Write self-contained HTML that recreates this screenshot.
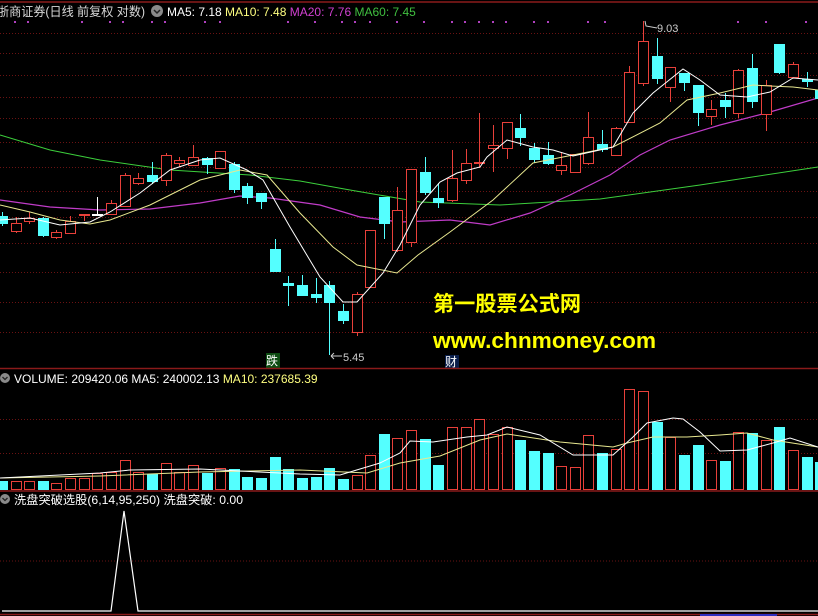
<!DOCTYPE html>
<html><head><meta charset="utf-8"><style>
html,body{margin:0;padding:0;background:#000;width:818px;height:616px;overflow:hidden}
svg{display:block}
text{font-family:"Liberation Sans","Noto Sans CJK SC",sans-serif}
</style></head><body>
<svg id="s" width="818" height="616" viewBox="0 0 818 616" xmlns="http://www.w3.org/2000/svg">
<rect width="818" height="616" fill="#000"/>
<line x1="0" y1="2" x2="818" y2="2" stroke="#8a1a1a" stroke-width="1.5"/>
<g id="grid" stroke="#6a1212" stroke-width="1" stroke-dasharray="1,2"></g>
<g id="dots" fill="#b040c0"></g>
<polyline fill="none" stroke="#3ccf3c" stroke-width="1" points="0,135 50,150 100,160 170,170 250,175 300,181 350,190 420,202 500,205 600,199 700,185 818,167"/>
<polyline fill="none" stroke="#c03cc8" stroke-width="1.2" points="0,200 50,207 100,210 150,209 200,203 240,196 270,198 320,205 360,217 400,222 450,220 490,225 530,213 570,195 610,175 640,155 670,140 720,125 770,112 818,98"/>
<g id="candles"></g>
<polyline fill="none" stroke="#e8e890" stroke-width="1" points="0,205 30,212 60,220 90,224 110,220 150,205 200,180 240,170 267,175 300,213 333,247 357,265 397,273 418,255 450,232 493,200 533,163 573,155 613,147 660,123 687,100 720,93 753,85 770,86 793,87 818,90"/>
<polyline fill="none" stroke="#fff" stroke-width="1" points="0,220 30,218 60,225 90,222 110,212 140,193 170,170 200,160 220,158 247,170 263,180 290,227 320,277 343,302 357,302 383,273 400,245 420,205 440,182 457,173 480,167 487,157 507,140 533,147 553,150 573,156 613,147 633,113 653,93 683,69 700,80 720,95 747,97 770,92 793,78 818,80"/>
<text x="-3" y="16" fill="#d8d8d8" font-size="12.5" textLength="148" lengthAdjust="spacingAndGlyphs">浙商证券(日线 前复权 对数)</text>
<circle cx="157" cy="11" r="6" fill="#8a8a8a"/><path d="M154 10 L157 13 L160 10" stroke="#222" stroke-width="1.5" fill="none"/>
<text x="167" y="16" font-size="12"><tspan fill="#fff">MA5: 7.18 </tspan><tspan fill="#ffff80">MA10: 7.48 </tspan><tspan fill="#d040d0">MA20: 7.76 </tspan><tspan fill="#40c040">MA60: 7.45</tspan></text>
<path d="M645 21 L646 26 L657 28" stroke="#ccc" fill="none"/>
<text x="657" y="32" fill="#ccc" font-size="11">9.03</text>
<path d="M331 356 L342 356 M331 356 l3 -3 M331 356 l3 3" stroke="#ccc" fill="none"/>
<text x="343" y="361" fill="#ccc" font-size="11">5.45</text>
<rect x="266" y="353" width="14" height="15" fill="#0d4d12"/><text x="266" y="365" fill="#fff" font-size="12">跌</text>
<rect x="445" y="355" width="14" height="14" fill="#0a1e4a"/><text x="445" y="366" fill="#fff" font-size="12">财</text>
<text x="433" y="311" fill="#ffff00" font-size="21" font-weight="bold" textLength="148" lengthAdjust="spacingAndGlyphs" font-family="'Noto Sans CJK SC',sans-serif">第一股票公式网</text>
<text x="433" y="348" fill="#ffff00" font-size="22" font-weight="bold" textLength="223" lengthAdjust="spacingAndGlyphs">www.chnmoney.com</text>
<line x1="0" y1="368.5" x2="818" y2="368.5" stroke="#8a1a1a" stroke-width="1.5"/>
<circle cx="5" cy="378" r="5" fill="#8a8a8a"/><path d="M2.5 377 L5 379.5 L7.5 377" stroke="#222" stroke-width="1.3" fill="none"/>
<text x="14" y="383" font-size="12"><tspan fill="#fff">VOLUME: 209420.06  MA5: 240002.13  </tspan><tspan fill="#ffff80">MA10: 237685.39</tspan></text>
<g id="vol"></g>
<polyline fill="none" stroke="#e8e890" stroke-width="1" points="0,478 100,476 200,472 300,470 367,473 400,463 440,456 480,440 507,434 560,442 613,447 627,443 653,437 687,437 720,435 747,433 773,440 818,447"/>
<polyline fill="none" stroke="#fff" stroke-width="1" points="0,478 100,473 130,470 200,469 300,474 340,475 380,463 400,453 410,441 433,442 467,437 487,435 507,427 540,435 573,455 613,455 633,437 647,423 673,418 683,419 700,432 720,451 747,450 773,443 790,438 818,447"/>
<line x1="0" y1="491" x2="818" y2="491" stroke="#8a1a1a" stroke-width="1.5"/>
<circle cx="5" cy="499" r="5" fill="#8a8a8a"/><path d="M2.5 498 L5 500.5 L7.5 498" stroke="#222" stroke-width="1.3" fill="none"/>
<text x="14" y="504" fill="#fff" font-size="12" textLength="229" lengthAdjust="spacingAndGlyphs">洗盘突破选股(6,14,95,250) 洗盘突破: 0.00</text>
<line x1="0" y1="561" x2="818" y2="561" stroke="#6a1212" stroke-dasharray="1,2"/>
<polyline fill="none" stroke="#fff" stroke-width="1.2" points="2,611 111,611 124,511 138,611 818,611"/>
<line x1="0" y1="614.5" x2="818" y2="614.5" stroke="#8a1a1a" stroke-width="1.5"/>
<line x1="700" y1="615" x2="777" y2="615" stroke="#3030c0" stroke-width="2"/>
</svg>
<script>
var NS="http://www.w3.org/2000/svg";
function el(p,t,a){var e=document.createElementNS(NS,t);for(var k in a)e.setAttribute(k,a[k]);p.appendChild(e);return e;}
var g=document.getElementById('grid');
[33,53,75,97,118,142,167,191,217,243,272,302,332,419,453].forEach(function(y){el(g,'line',{x1:0,x2:818,y1:y+.5,y2:y+.5});});
var d=document.getElementById('dots');
[15,28,82,110,123,152,165,205,220,288,315,342,355,370,397,424,452,465,479,493,506,534,548,588,605,738,766,806].forEach(function(x){el(d,'rect',{x:x-1,y:21,width:2,height:2});});
var C=[[0,'c',216,224,212,226],[1,'r',223,231,217,233],[2,'r',218,221,212,224],[3,'c',218,236,217,237],[4,'r',232,237,230,239],
[5,'r',221,233,216,233],[6,'f',214,216,214,221],[7,'w',214,215,197,216],[8,'r',203,214,200,215],[9,'r',175,206,173,207],
[10,'r',178,183,173,185],[11,'c',175,182,162,184],[12,'r',155,180,153,186],[13,'r',160,163,157,167],[14,'r',157,165,145,166],
[15,'c',158,165,157,174],[16,'r',151,168,151,168],[17,'c',164,190,162,193],[18,'c',186,198,183,204],[19,'c',193,202,193,209],
[20,'c',249,272,239,272],[21,'c',283,286,276,306],[22,'c',285,296,275,296],[23,'c',294,298,278,303],[24,'c',285,303,281,355],
[25,'c',311,321,304,324],[26,'r',294,332,292,336],[27,'r',230,287,230,287],[28,'c',197,224,197,239],[29,'r',210,250,187,252],
[30,'r',169,242,169,247],[31,'c',172,193,157,195],[32,'c',198,203,183,208],[33,'r',178,200,150,202],[34,'r',163,180,149,184],
[35,'f',162,164,113,168],[36,'r',145,148,125,172],[37,'r',122,148,122,159],[38,'c',128,138,114,146],[39,'c',148,160,143,163],
[40,'c',155,164,142,165],[41,'r',165,170,152,175],[42,'r',154,172,154,172],[43,'r',137,163,112,165],[44,'c',144,150,130,152],
[45,'r',128,155,127,156],[46,'r',72,122,66,122],[47,'r',41,83,21,86],[48,'c',56,79,38,84],[49,'r',67,87,67,102],
[50,'c',73,83,73,91],[51,'c',85,113,85,126],[52,'r',109,116,100,125],[53,'c',100,107,93,118],[54,'r',70,113,69,118],
[55,'c',68,102,54,108],[56,'r',85,114,80,131],[57,'c',44,73,44,74],[58,'r',64,77,62,78],[59,'c',79,82,72,87],[60,'c',90,99,88,100]];
var cg=document.getElementById('candles');
C.forEach(function(a){var cx=Math.round(1.9+13.64*a[0])+.5,col=a[1]=='c'?'#54ffff':(a[1]=='w'?'#fff':'#e8403a');
el(cg,'line',{x1:cx,x2:cx,y1:a[4],y2:a[5],stroke:col});
var h=Math.max(1,a[3]-a[2]);
if(a[1]=='r')el(cg,'rect',{x:cx-5,y:a[2]+.5,width:10,height:h,fill:'#000',stroke:col});
else el(cg,'rect',{x:cx-5.5,y:a[2],width:11,height:Math.max(2,h),fill:col});});
var V=[481,481,481,481,483,478,478,473,472,460,472,474,463,472,465,473,468,469,477,478,457,469,478,477,468,479,475,455,434,438,430,439,465,427,427,419,434,427,440,451,453,466,467,435,453,449,389,391,422,437,455,445,460,461,432,433,440,427,450,457,462];
var VT=C.map(function(a){return a[1]});VT[7]='r';VT[6]='r';VT[35]='r';
var vg=document.getElementById('vol');
V.forEach(function(t,i){var cx=Math.round(1.9+13.64*i)+.5;
if(VT[i]=='c')el(vg,'rect',{x:cx-5.5,y:t,width:11,height:490-t,fill:'#54ffff'});
else el(vg,'rect',{x:cx-5,y:t+.5,width:10,height:489-t,fill:'#000',stroke:'#e8403a'});});
</script>
</body></html>
